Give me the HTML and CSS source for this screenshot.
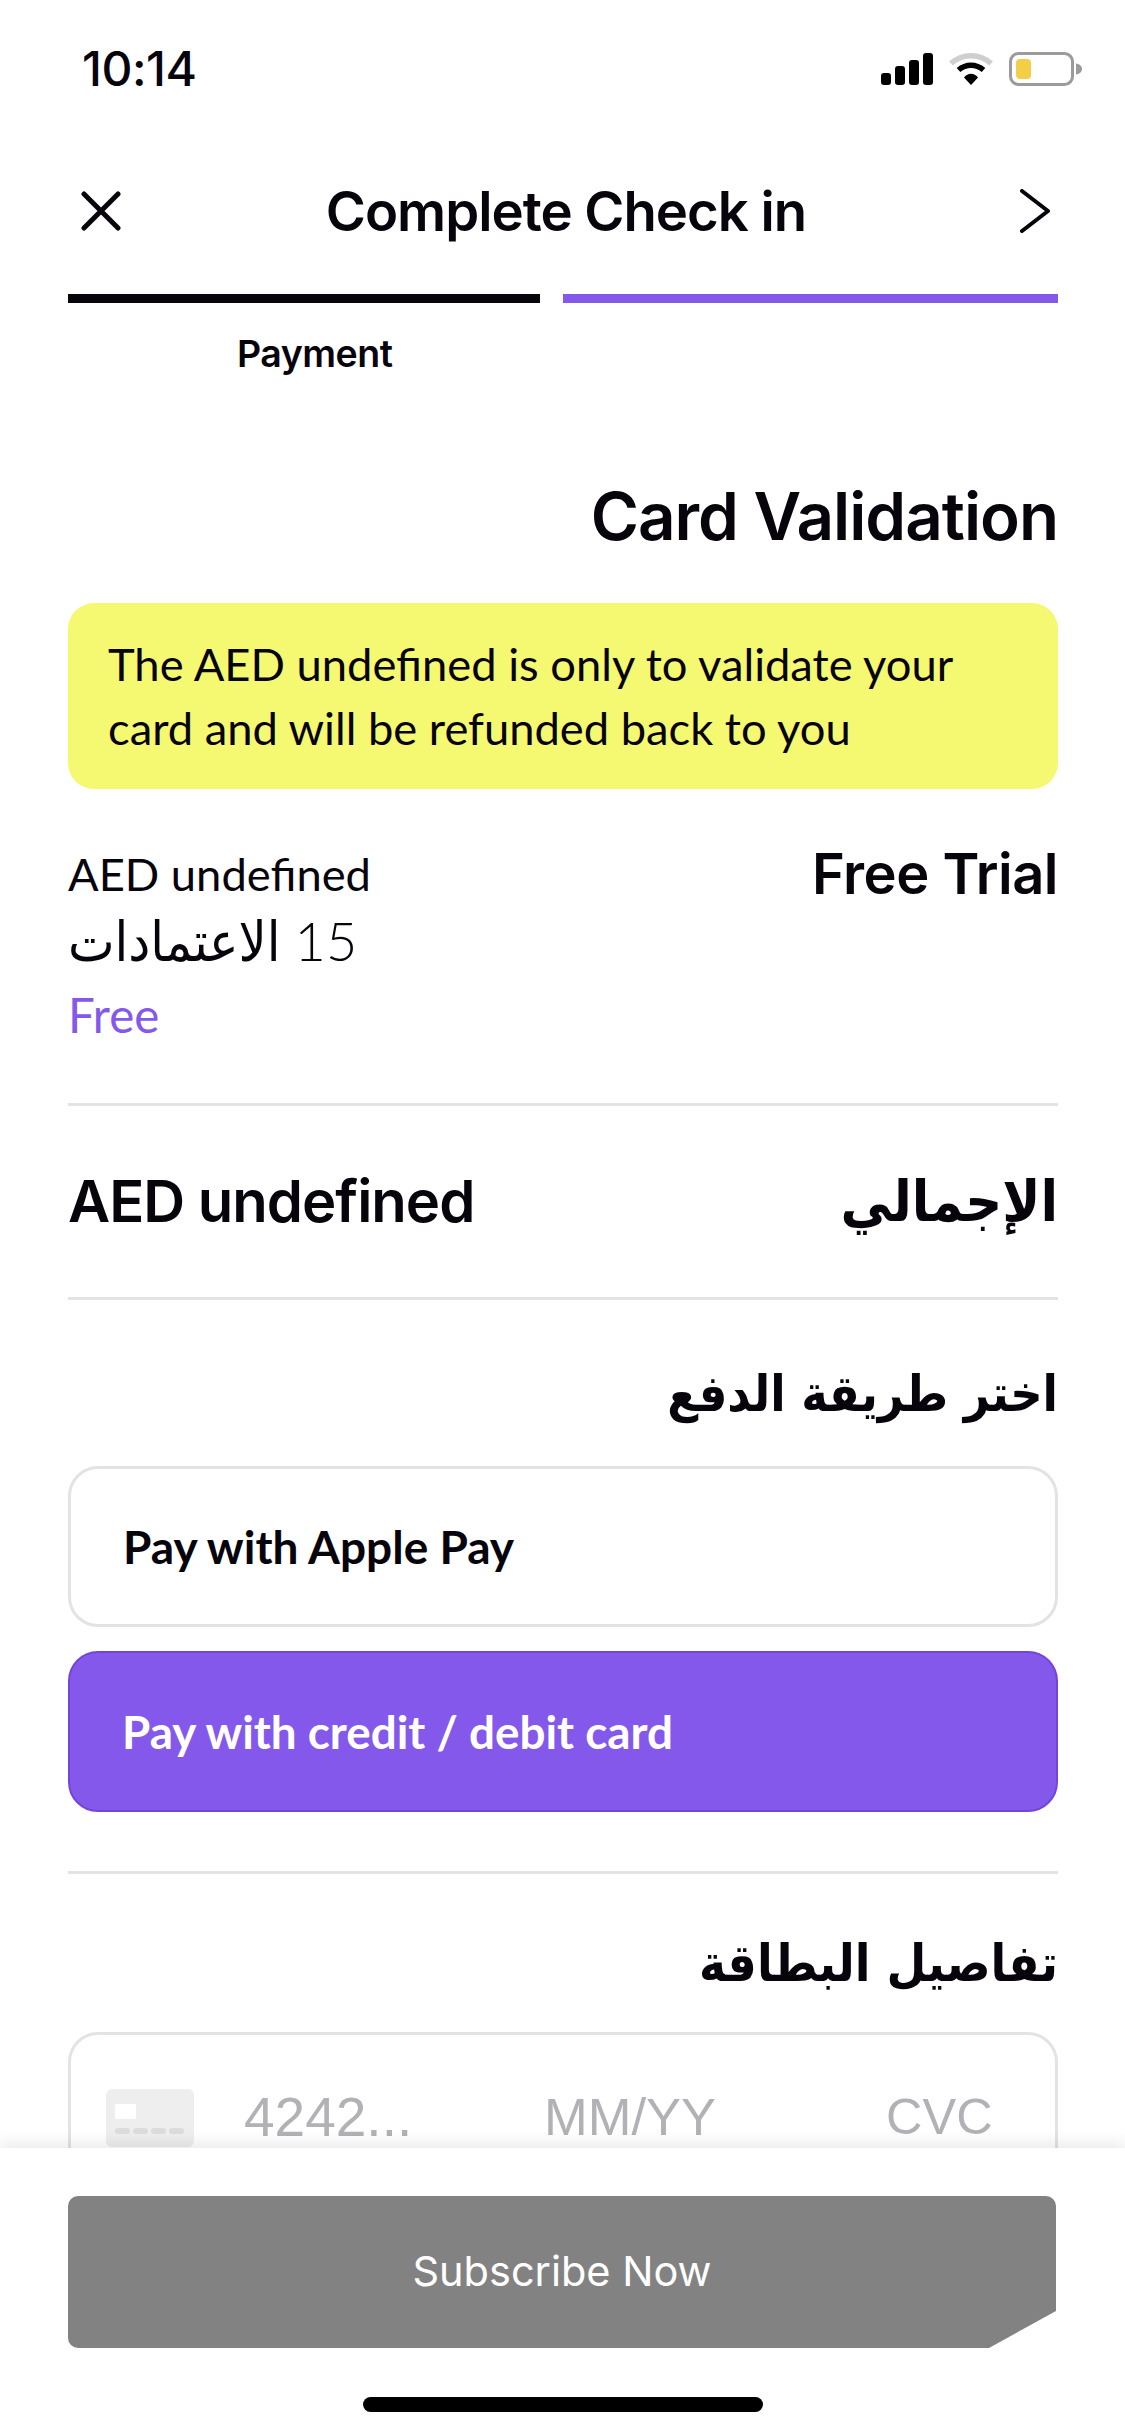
FILE: index.html
```html
<!DOCTYPE html>
<html lang="en">
<head>
<meta charset="utf-8">
<title>Complete Check in</title>
<link rel="stylesheet" href="styles.css">
</head>
<body>
<div class="screen">
  <div class="status">
    <span class="time">10:14</span>
    <div class="status-icons">
      <svg class="sig" width="54" height="32" viewBox="0 0 54 32"><rect x="0" y="20" width="10" height="12" rx="3"/><rect x="14" y="13" width="10" height="19" rx="3"/><rect x="28" y="7" width="10" height="25" rx="3"/><rect x="42" y="0" width="10" height="32" rx="3"/></svg>
      <svg class="wifi" width="46" height="34" viewBox="0 0 46 34"><path d="M3 11.500C14 1 32 1 43 11.500" fill="none" stroke="#cfcfcf" stroke-width="5.500"/><path d="M10.500 18C18 11.500 28 11.500 35.500 18" fill="none" stroke="#000" stroke-width="5.500"/><path d="M16 25.500C20 20.500 26 20.500 30 25.500L23 33Z" fill="#000"/></svg>
      <svg class="batt" width="74" height="34" viewBox="0 0 74 34"><rect x="1.500" y="1.500" width="62" height="31" rx="8" fill="#fff" stroke="#9b9b9b" stroke-width="3"/><rect x="7" y="7" width="15" height="20" rx="4" fill="#f5ce47"/><path d="M67 11.500c4 .5 6 3 6 5.500s-2 5-6 5.500z" fill="#9b9b9b"/></svg>
    </div>
  </div>

  <header class="nav">
    <svg class="nav-x" width="40" height="40" viewBox="0 0 40 40"><path d="M3 3L37 37M37 3L3 37" fill="none" stroke="#07040c" stroke-width="5" stroke-linecap="round"/></svg>
    <h1 class="nav-title">Complete Check in</h1>
    <svg class="nav-next" width="32" height="44" viewBox="0 0 32 44"><path d="M3 2L29 22L3 42" fill="none" stroke="#07040c" stroke-width="4" stroke-linecap="round" stroke-linejoin="round"/></svg>
  </header>

  <div class="steps">
    <div class="step step-done"></div>
    <div class="step step-active"></div>
  </div>
  <div class="step-label">Payment</div>

  <main class="content">
    <h2 class="h-card">Card Validation</h2>
    <div class="notice">The AED undefined is only to validate your<br>card and will be refunded back to you</div>

    <section class="plan">
      <div class="plan-left">
        <div class="plan-price">AED undefined</div>
        <div class="plan-credits"><span class="num">15</span> <span class="ar">الاعتمادات</span></div>
        <div class="plan-free">Free</div>
      </div>
      <div class="plan-name">Free Trial</div>
    </section>

    <section class="total">
      <div class="total-amount">AED undefined</div>
      <div class="ar total-label">الإجمالي</div>
    </section>

    <h3 class="ar h-method">اختر طريقة الدفع</h3>
    <div class="pay pay-apple">Pay with Apple Pay</div>
    <div class="pay pay-card">Pay with credit / debit card</div>

    <div class="rule"></div>

    <h3 class="ar h-details">تفاصيل البطاقة</h3>
    <div class="card-input">
      <svg class="card-icon" width="88" height="58" viewBox="0 0 88 58"><rect width="88" height="58" rx="6" fill="#eeeeef"/><rect x="9" y="15" width="21" height="15" rx="1.500" fill="#fff"/><rect x="9" y="39" width="15" height="6" rx="3" fill="#dcdcdd"/><rect x="27" y="39" width="15" height="6" rx="3" fill="#dcdcdd"/><rect x="45" y="39" width="15" height="6" rx="3" fill="#dcdcdd"/><rect x="63" y="39" width="15" height="6" rx="3" fill="#dcdcdd"/></svg>
      <span class="ph ph-num">4242...</span>
      <span class="ph ph-exp">MM/YY</span>
      <span class="ph ph-cvc">CVC</span>
    </div>
  </main>

  <footer class="footer">
    <button class="cta">Subscribe Now</button>
    <div class="home"></div>
  </footer>
</div>
</body>
</html>
```

FILE: styles.css
```css
* { box-sizing: border-box; }
html, body { margin: 0; padding: 0; background: #fff; }
.screen {
  position: relative;
  width: 1125px;
  height: 2436px;
  overflow: hidden;
  color: #07040c;
  font-family: "Lato", sans-serif;
  text-rendering: optimizeLegibility;
}
.status {
  display: flex;
  align-items: center;
  justify-content: space-between;
  height: 136px;
  padding: 2px 42px 0 82px;
}
.time { font: 500 48px/1 "Inter", sans-serif; letter-spacing: -0.5px; }
.status-icons { display: flex; align-items: center; gap: 15px; }
.sig { display: block; margin-right: -2px; }
.wifi, .batt { display: block; }

.nav {
  display: flex;
  align-items: center;
  justify-content: space-between;
  height: 150px;
  padding: 0 74px 0 81px;
}
.nav-title {
  margin: 0 8px 0 0;
  font: 600 54.500px/1 "Inter", sans-serif;
  letter-spacing: -1px;
}
.steps { display: flex; gap: 23px; padding: 8px 67px 0 68px; }
.step { height: 9px; }
.step-done { width: 472px; background: #07040c; }
.step-active { flex: 1; background: #8558ec; }
.step-label {
  padding: 30px 0 0 237px;
  font: 600 37.500px/42px "Inter", sans-serif;
  letter-spacing: -0.5px;
}

.content { padding: 0 67px 0 68px; }
.h-card {
  margin: 104px 0 0;
  text-align: right;
  font: 600 65.500px/76px "Inter", sans-serif;
  letter-spacing: -1px;
}
.notice {
  margin-top: 48px;
  padding: 29px 40px 27px;
  height: 186px;
  border-radius: 26px;
  background: #f5f871;
  font-size: 45.300px;
  line-height: 64px;
}
.plan {
  display: flex;
  justify-content: space-between;
  padding: 52px 0 0;
  height: 317px;
  border-bottom: 3px solid #e3e3e4;
}
.plan-price { font-size: 45.300px; line-height: 66px; }
.plan-credits {
  direction: rtl;
  width: fit-content;
  font-size: 55px;
  line-height: 66px;
  height: 75px;
}
.plan-credits .num { font-weight: 300; font-size: 54px; }
.plan-free { color: #8558ec; font-size: 47.500px; line-height: 66px; }
.plan-name { margin-top: 3px; font: 600 56px/60px "Inter", sans-serif; letter-spacing: -0.5px; }

.total {
  display: flex;
  align-items: center;
  justify-content: space-between;
  height: 194px;
  padding-bottom: 2px;
  border-bottom: 3px solid #e3e3e4;
}
.total-amount { font: 600 58px/1 "Inter", sans-serif; letter-spacing: -1px; }
.ar { font-family: "DejaVu Sans Condensed", "DejaVu Sans", sans-serif; }
.total-label { font-size: 57px; font-weight: 700; }
.h-method {
  margin: 0;
  padding-top: 60px;
  height: 166px;
  text-align: right;
  direction: rtl;
  font-size: 50px;
  line-height: 68px;
  font-weight: 700;
}
.pay {
  display: flex;
  align-items: center;
  height: 161px;
  padding-left: 52px;
  border-radius: 30px;
  font-size: 46px;
  font-weight: 700;
}
.pay-apple { border: 3px solid #e3e3e4; }
.pay-card {
  margin-top: 24px;
  border: 2px solid #7344d8;
  background: #8558ec;
  color: #fff;
  font-size: 45.800px;
}
.rule { height: 3px; margin-top: 59px; background: #e3e3e4; }
.h-details {
  margin: 0;
  padding-top: 56px;
  height: 158px;
  text-align: right;
  direction: rtl;
  font-size: 51px;
  line-height: 68px;
  font-weight: 700;
}
.card-input {
  display: flex;
  align-items: center;
  height: 161px;
  padding: 10px 0 0 35px;
  border: 3px solid #e3e3e4;
  border-radius: 30px;
}
.card-icon { flex: none; }
.ph {
  font: 400 52px/1 "Liberation Sans", sans-serif;
  color: #b2b2b6;
}
.ph-num { margin-left: 50px; width: 300px; font-size: 55px; }
.ph-exp { width: 342px; font-size: 52.500px; }
.ph-cvc { font-size: 50.500px; }

.footer {
  position: absolute;
  left: 0;
  right: 0;
  bottom: 0;
  height: 288px;
  padding: 48px 69px 0 68px;
  background: #fff;
  box-shadow: 0 -6px 14px rgba(0, 0, 0, 0.08);
}
.cta {
  display: block;
  width: 988px;
  height: 152px;
  padding: 0;
  border: 0;
  border-radius: 10px;
  background: #828282;
  color: #fff;
  font: 400 41.500px/1 "Inter", sans-serif;
  clip-path: polygon(0 0, 100% 0, 100% 115px, 921px 100%, 0 100%);
}
.home {
  width: 400px;
  height: 15px;
  margin: 49px 0 0 295px;
  border-radius: 8px;
  background: #000;
}
```
